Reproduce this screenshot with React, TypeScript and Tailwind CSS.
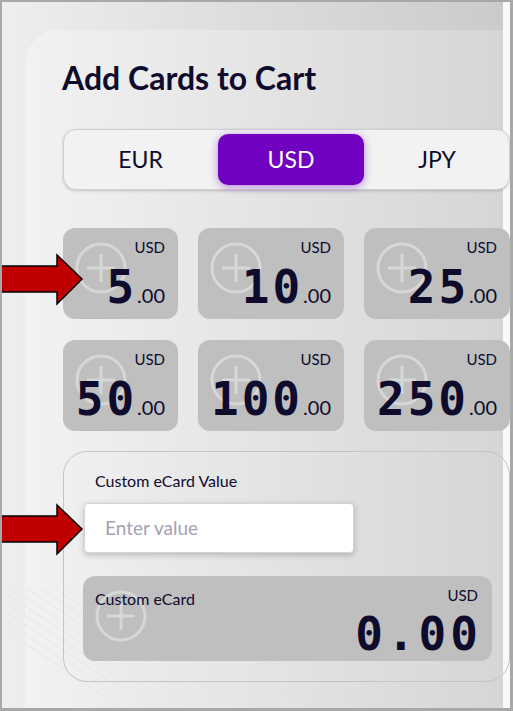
import React from "react";

const ink = "text-[#0e0b2c]";

function PlusCircle() {
  return (
    <svg
      className="absolute left-[12px] top-[14px]"
      width="52"
      height="52"
      viewBox="0 0 52 52"
      fill="none"
      stroke="#d7d7d7"
      strokeWidth="3"
    >
      <circle cx="26" cy="26" r="24" />
      <line x1="26" y1="12" x2="26" y2="40" />
      <line x1="12" y1="26" x2="40" y2="26" />
    </svg>
  );
}

function ValueCard({ amount }: { amount: string }) {
  return (
    <div className="relative h-[91px] rounded-[12px] bg-[#bfbfbf]">
      <PlusCircle />
      <div className="relative flex flex-col items-end pr-[13px] pt-[10px]">
        <div className={`text-[15px] leading-[18px] ${ink}`}>USD</div>
        <div className="mt-[8px] flex items-baseline">
          <span
            className={`text-[46px] font-bold leading-[46px] tracking-[3px] ${ink}`}
            style={{ fontFamily: '"DejaVu Sans Mono", monospace' }}
          >
            {amount}
          </span>
          <span className={`text-[20px] leading-[20px] ${ink}`}>.00</span>
        </div>
      </div>
    </div>
  );
}

function Arrow({ top }: { top: number }) {
  return (
    <svg
      className="absolute left-0"
      style={{ top }}
      width="84"
      height="56"
      viewBox="0 0 84 56"
    >
      <polygon
        points="-3,14 55,14 55,3 80,27 55,52 55,40 -3,40"
        fill="#c00000"
        stroke="#000"
        strokeWidth="1.5"
        strokeLinejoin="miter"
      />
    </svg>
  );
}

export default function App() {
  const amounts = ["5", "10", "25", "50", "100", "250"];
  return (
    <div
      className="relative h-[711px] w-[513px] overflow-hidden border-b-[3px] border-l-2 border-r-[3px] border-t-2 border-[#a8a8a8] bg-[#f9f9f9]"
      style={{ fontFamily: 'Lato, "Noto Sans", sans-serif' }}
    >
      <div className="flex h-full w-[501px] flex-col bg-gradient-to-r from-[#eeeeee] to-[#cbcbcb]">
        <div className="relative ml-[23px] mt-[28px] flex-1 rounded-tl-[34px] bg-gradient-to-r from-[#f2f2f2] to-[#d6d6d6] pl-[38px] pt-[29px]">
          <svg
            className="absolute bottom-0 left-[-23px]"
            width="300"
            height="120"
            viewBox="0 0 300 120"
            stroke="#e6e6e6"
            strokeWidth="1"
          >
            {Array.from({ length: 18 }).map((_, i) => (
              <line key={i} x1={-60 + i * 14} y1={0} x2={120 + i * 14} y2={120} />
            ))}
          </svg>

          <h1 className={`ml-[-1px] text-[32px] font-bold leading-[38px] ${ink}`}>
            Add Cards to Cart
          </h1>

          <div className="mt-[32px] grid h-[61px] w-[447px] grid-cols-[145px_146px_1fr] gap-[5px] rounded-[13px] border border-[#cfcfcf] bg-[#f2f2f2] p-[4px] shadow-[0_1px_3px_rgba(0,0,0,0.18)]">
            <div className={`flex items-center justify-center text-[23px] ${ink}`}>EUR</div>
            <div className="flex items-center justify-center rounded-[10px] bg-[#7001c0] text-[23px] text-white shadow-[0_2px_8px_rgba(112,0,192,0.45)]">
              USD
            </div>
            <div className={`flex items-center justify-center text-[23px] ${ink}`}>JPY</div>
          </div>

          <div className="mt-[38px] grid w-[447px] grid-cols-[115px_146px_146px] gap-x-[20px] gap-y-[21px]">
            {amounts.map((a) => (
              <ValueCard key={a} amount={a} />
            ))}
          </div>

          <div className="relative mt-[20px] h-[231px] w-[447px] rounded-[24px] border border-[#c4c4c4] px-[20px] pt-[19px]">
            <div className={`ml-[11px] text-[16px] leading-[20px] ${ink}`}>Custom eCard Value</div>
            <div className="mt-[12px] flex h-[50px] w-[270px] items-center rounded-[4px] border border-[#d4d4d4] bg-white pl-[20px] text-[19px] text-[#a4a1b4] shadow-[0_2px_6px_rgba(0,0,0,0.22)]">
              Enter value
            </div>
            <div className="relative ml-[-1px] mt-[23px] h-[85px] w-[409px] rounded-[12px] bg-[#bfbfbf]">
              <PlusCircle />
              <div className="relative flex flex-col pl-[12px] pr-[14px] pt-[10px]">
                <div className="flex items-start justify-between">
                  <span className={`mt-[3px] text-[16px] leading-[20px] ${ink}`}>Custom eCard</span>
                  <span className={`text-[15px] leading-[18px] ${ink}`}>USD</span>
                </div>
                <div className="mt-[2px] flex justify-end">
                  <span
                    className={`mr-[-4px] text-[46px] font-bold leading-[46px] tracking-[4px] ${ink}`}
                    style={{ fontFamily: '"DejaVu Sans Mono", monospace' }}
                  >
                    0.00
                  </span>
                </div>
              </div>
            </div>
          </div>
        </div>
      </div>

      <Arrow top={250} />
      <Arrow top={500} />
    </div>
  );
}
